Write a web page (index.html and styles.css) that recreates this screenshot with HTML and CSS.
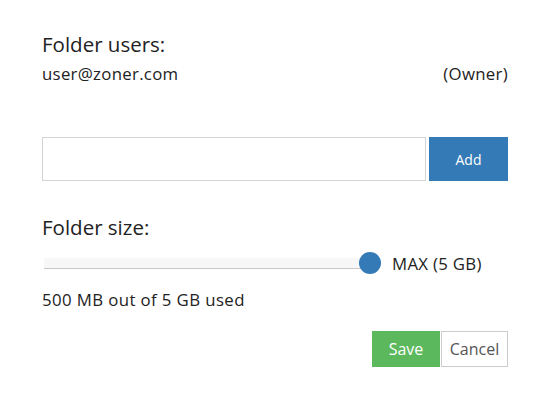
FILE: index.html
```html
<!DOCTYPE html>
<html lang="en">
<head>
  <meta charset="UTF-8">
  <title>Folder settings</title>
  <meta name="viewport" content="width=device-width, initial-scale=1.0">
  <link rel="stylesheet" href="styles.css">
</head>
<body>
  <div class="dialog">
    <h3 class="title">Folder users:</h3>
    <div class="user-row">
      <span>user@zoner.com</span>
      <span>(Owner)</span>
    </div>

    <div class="add-row">
      <input type="text" class="email-input">
      <button class="btn btn-add">Add</button>
    </div>

    <h3 class="title size-title">Folder size:</h3>
    <div class="slider-row">
      <div class="track">
        <div class="thumb"></div>
      </div>
      <span class="max-label">MAX (5 GB)</span>
    </div>
    <div class="usage">500 MB out of 5 GB used</div>

    <div class="actions">
      <button class="btn btn-save">Save</button>
      <button class="btn btn-cancel">Cancel</button>
    </div>
  </div>
</body>
</html>
```

FILE: styles.css
```css
body {
  margin: 0;
  background: #fff;
  color: #222;
  font-family: 'Open Sans', sans-serif;
}

.dialog {
  width: 466px;
  padding: 30px 42px 0;
}

.title {
  margin: 0;
  font-size: 20.5px;
  font-weight: normal;
  line-height: 28px;
}

.user-row {
  display: flex;
  justify-content: space-between;
  font-size: 16.8px;
  letter-spacing: 0.3px;
  line-height: 20px;
  margin-top: 6px;
}

.add-row {
  display: flex;
  gap: 3px;
  margin-top: 53px;
  height: 44px;
}

.email-input {
  flex: 1;
  margin: 0;
  border: 1px solid #d4d4d4;
  padding: 0 10px;
  font-size: 15px;
  outline: none;
}

.btn {
  border: none;
  margin: 0;
  font-family: 'Open Sans', sans-serif;
  cursor: pointer;
}

.btn-add {
  width: 79px;
  background: #337ab7;
  color: #fff;
  font-size: 14px;
}

.size-title {
  margin-top: 32px;
}

.slider-row {
  display: flex;
  align-items: center;
  margin-top: 9px;
  height: 26px;
}

.track {
  position: relative;
  width: 326px;
  height: 10px;
  margin-left: 2px;
  background: #f7f7f7;
  border-bottom: 1px solid #c8c8c8;
}

.thumb {
  position: absolute;
  right: -11px;
  top: -6px;
  width: 22px;
  height: 22px;
  border-radius: 50%;
  background: #337ab7;
}

.max-label {
  margin-left: 22px;
  font-size: 16.8px;
  letter-spacing: 0.3px;
}

.usage {
  font-size: 16.8px;
  letter-spacing: 0.4px;
  line-height: 20px;
  margin-top: 14px;
}

.actions {
  display: flex;
  justify-content: flex-end;
  gap: 1px;
  margin-top: 21px;
}

.actions .btn {
  height: 36px;
  font-size: 16px;
}

.btn-save {
  width: 68px;
  background: #5cb85c;
  color: #fff;
}

.btn-cancel {
  width: 67px;
  background: #fff;
  color: #555;
  border: 1px solid #ccc;
}
```
